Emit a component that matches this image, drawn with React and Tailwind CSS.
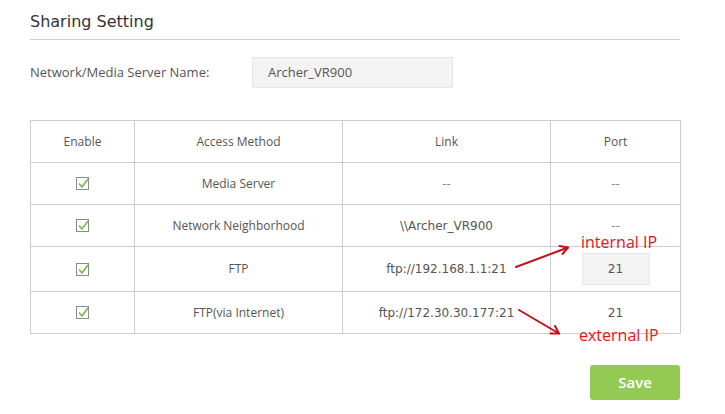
import React from "react";

function Check() {
  return (
    <svg width="15" height="15" viewBox="0 0 15 15" className="inline-block">
      <rect x="1.5" y="1.5" width="12" height="12" fill="none" stroke="#8a8a8a" strokeWidth="1" />
      <polyline points="4,7.5 7,11 13,3" fill="none" stroke="#77b843" strokeWidth="1.6" />
    </svg>
  );
}

const rows = [
  { method: "Media Server", link: "--", port: "--", h: "h-[42px]" },
  { method: "Network Neighborhood", link: "\\\\Archer_VR900", port: "--", h: "h-[42px]" },
  { method: "FTP", link: "ftp://192.168.1.1:21", port: "input", h: "h-[45px]" },
  { method: "FTP(via Internet)", link: "ftp://172.30.30.177:21", port: "21", h: "h-[42px]" },
];

export default function App() {
  return (
    <div className="relative w-[725px] h-[414px] bg-white text-[#555] font-['Open_Sans',sans-serif] overflow-hidden">
      <div className="pl-[30px] pr-[45px]">
        <div className="pt-[12px] pb-[7px] border-b border-[#cfcfcf] text-[16px] leading-[20px] text-[#333] font-['DejaVu_Sans',sans-serif]">
          Sharing Setting
        </div>
        <div className="mt-[17px] flex items-center">
          <div className="w-[222px] text-[13px] text-[#555]">Network/Media Server Name:</div>
          <div className="w-[201px] h-[31px] bg-[#f3f3f3] border border-[#e6e6e6] flex items-center pl-[15px] text-[13px] text-[#555]">
            Archer_VR900
          </div>
        </div>
        <table className="mt-[32px] w-[650px] border-collapse table-fixed text-[12px] text-[#555]">
          <colgroup>
            <col className="w-[104px]" />
            <col className="w-[208px]" />
            <col className="w-[208px]" />
            <col className="w-[130px]" />
          </colgroup>
          <thead>
            <tr className="h-[42px]">
              <th className="border border-[#cccccc] font-normal text-center">Enable</th>
              <th className="border border-[#cccccc] font-normal text-center">Access Method</th>
              <th className="border border-[#cccccc] font-normal text-center">Link</th>
              <th className="border border-[#cccccc] font-normal text-center">Port</th>
            </tr>
          </thead>
          <tbody>
            {rows.map((r) => (
              <tr key={r.method} className={r.h}>
                <td className="border border-[#cccccc] text-center align-middle">
                  <div className="flex justify-center">
                    <Check />
                  </div>
                </td>
                <td className="border border-[#cccccc] text-center">{r.method}</td>
                <td className={"border border-[#cccccc] text-center font-['DejaVu_Sans',sans-serif] " + (r.link === "--" ? "text-[#888]" : "")}>
                  {r.link}
                </td>
                <td className="border border-[#cccccc] text-center font-['DejaVu_Sans',sans-serif]">
                  {r.port === "input" ? (
                    <div className="flex justify-center">
                      <div className="w-[68px] h-[32px] bg-[#f3f3f3] border border-[#e6e6e6] flex items-center justify-center">21</div>
                    </div>
                  ) : (
                    <span className={r.port === "--" ? "text-[#888]" : ""}>{r.port}</span>
                  )}
                </td>
              </tr>
            ))}
          </tbody>
        </table>
        <div className="mt-[31px] flex justify-end">
          <button className="w-[90px] h-[35px] rounded-[3px] bg-[#94c954] text-white text-[15px] font-semibold">
            Save
          </button>
        </div>
      </div>

      <div className="absolute left-[581px] top-[234px] text-[16px] leading-none text-[#e8141b]">internal IP</div>
      <div className="absolute left-[579px] top-[327px] text-[16px] leading-none text-[#e8141b]">external IP</div>
      <svg className="absolute left-0 top-0 pointer-events-none" width="725" height="414">
        <g stroke="#c3101a" strokeWidth="2" fill="none" strokeLinecap="round" strokeLinejoin="round">
          <line x1="516" y1="267" x2="568" y2="247.5" />
          <polyline points="559.5,246 568,247.5 562.5,254" />
          <line x1="519" y1="310" x2="559" y2="333.5" />
          <polyline points="550.5,333.5 559,333.5 555,326" />
        </g>
      </svg>
    </div>
  );
}
